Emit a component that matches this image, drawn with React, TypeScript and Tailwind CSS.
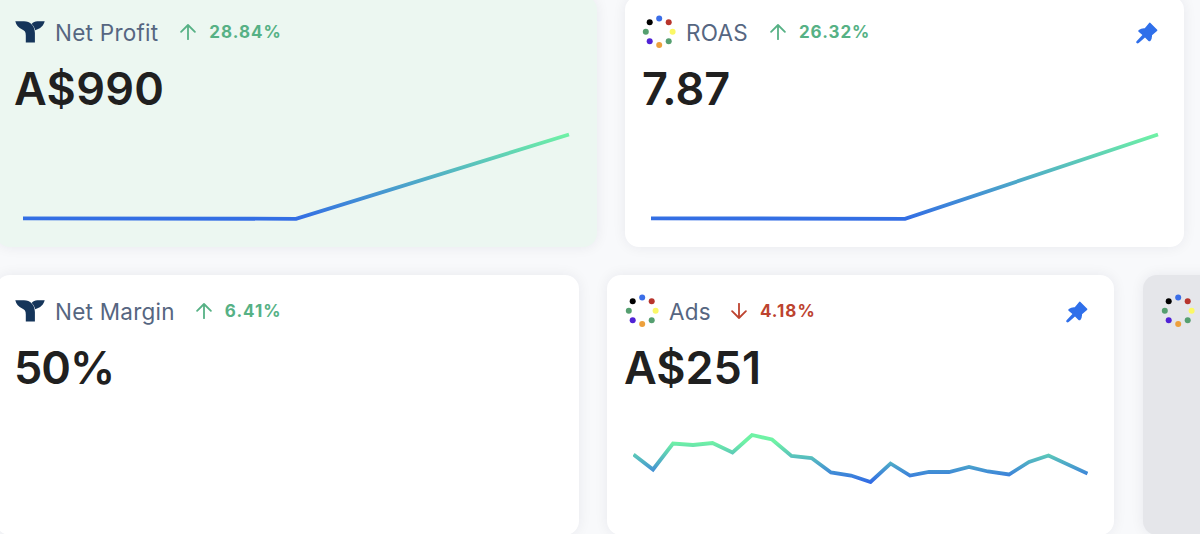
import React from "react";

const dots: [number, number, string][] = [
  [17.2, 3.4, "#3b6ee8"],
  [26.7, 7.3, "#b8342c"],
  [30.6, 16.8, "#fbf866"],
  [26.7, 26.2, "#559f70"],
  [17.2, 30.1, "#eda03c"],
  [7.7, 26.2, "#5022d6"],
  [3.8, 16.8, "#559f70"],
  [7.7, 7.3, "#000000"],
];

function DotRing() {
  return (
    <svg className="h-[34px] w-[34px] shrink-0" viewBox="0 0 34 34">
      {dots.map(([x, y, color], i) => (
        <circle key={i} cx={x} cy={y} r="3" fill={color} />
      ))}
    </svg>
  );
}

function WhaleTail() {
  return (
    <svg className="h-[22px] w-[30px] shrink-0" viewBox="0 0 30 22" fill="#15355a">
      <path d="M0.3 0.3H9C15.2 0.3 19.9 4.8 19.9 12V21.6H10.8V14.5C10.8 11 9.8 9.6 7.2 8.5C3.6 7 1.2 4.2 0.3 0.3Z" />
      <path d="M16.6 3C18.2 1.2 20 0.3 22.4 0.3H29.7C28.6 4.6 25.4 8 20.2 9.2C19.6 6.7 18.4 4.7 16.6 3Z" />
    </svg>
  );
}

function Trend({ value, down = false }: { value: string; down?: boolean }) {
  return (
    <div className={down ? "flex items-center text-[#bd432f]" : "flex items-center text-[#56b185]"}>
      <svg
        className={down ? "h-4 w-4 rotate-180" : "h-4 w-4"}
        viewBox="0 0 16 16"
        fill="none"
        stroke="currentColor"
        strokeWidth="1.8"
        strokeLinecap="round"
        strokeLinejoin="round"
      >
        <path d="M8 15.2V1M1.1 7.8 8 1l6.9 6.8" />
      </svg>
      <span className="ml-[13px] text-[17px] leading-6 font-bold tracking-[1px]">{value}</span>
    </div>
  );
}

function Pin() {
  return (
    <svg className="h-[22px] w-[22px] shrink-0" viewBox="0 0 22 22" fill="#2f6fea">
      <path d="M14.2 0.8 21.2 7.8Q21.7 8.3 21 8.9L16 13.2Q16.3 16.6 14.4 18.9Q13.4 19.8 12.5 18.9L9 15.4 2.7 20.9Q1.5 21.8 .6 21Q-.2 20.1 .8 19L6.4 12.9 2.6 9.8Q1.9 8.9 2.8 8.1Q5.4 6 8.8 6.3L13.1 1Q13.6.2 14.2.8Z" />
    </svg>
  );
}

function Sparkline({ id, points, width, height, className, top = 2 }: { id: string; points: string; width: number; height: number; className: string; top?: number }) {
  return (
    <svg className={className} viewBox={`0 0 ${width} ${height}`} fill="none">
      <defs>
        <linearGradient id={id} gradientUnits="userSpaceOnUse" x1="0" y1={top} x2="0" y2={height - 2}>
          <stop offset="0" stopColor="#6ff2a5" />
          <stop offset="1" stopColor="#326ce5" />
        </linearGradient>
      </defs>
      <polyline points={points} stroke={`url(#${id})`} strokeWidth="3.8" strokeLinejoin="miter" />
    </svg>
  );
}

const card = "shrink-0 rounded-[14px] shadow-[0_0_14px_rgba(20,30,50,0.07)]";
const title = "relative top-px text-[22.5px] leading-8 tracking-[0.25px] text-[#566681]";
const amount = "text-[45px] leading-[56px] font-semibold text-[#202020]";

export default function App() {
  return (
    <main className="h-[534px] w-[1200px] overflow-hidden bg-[#f8f9fb] font-['Inter',sans-serif]">
      <div className="-mt-1 -ml-1 flex w-[1300px] gap-7">
        <section className={`${card} h-[251px] w-[601px] bg-[#ecf7f1] pt-[19px] pl-[19px]`}>
          <div className="flex h-[34px] items-center">
            <WhaleTail />
            <h2 className={`${title} mr-[22px] ml-[10px]`}>Net Profit</h2>
            <Trend value="28.84%" />
          </div>
          <p className={`${amount} mt-[12px] -ml-px tracking-[0.3px]`}>A$990</p>
          <Sparkline id="profit" width={547} height={90} className="mt-[15px] ml-2 h-[90px] w-[547px]" points="0,86.3 273,86.8 546,2.5" />
        </section>
        <section className={`${card} h-[251px] w-[559px] bg-white pt-[19px] pl-[17px]`}>
          <div className="flex h-[34px] items-center">
            <DotRing />
            <h2 className={`${title} mr-[22px] ml-[10px]`}>ROAS</h2>
            <Trend value="26.32%" />
            <span className="mr-[26px] ml-auto pt-[2px]"><Pin /></span>
          </div>
          <p className={`${amount} mt-[12px]`}>7.87</p>
          <Sparkline id="roas" width={508} height={90} className="mt-[15px] ml-[9px] h-[90px] w-[508px]" points="0,86.3 254,86.8 507,2.5" />
        </section>
      </div>

      <div className="mt-7 -ml-1 flex w-[1400px] gap-7">
        <section className={`${card} h-[260px] w-[583px] bg-white pt-[19px] pl-[19px]`}>
          <div className="flex h-[34px] items-center">
            <WhaleTail />
            <h2 className={`${title} mr-[21px] ml-[10px]`}>Net Margin</h2>
            <Trend value="6.41%" />
          </div>
          <p className={`${amount} mt-[12px] -ml-px tracking-[-1px]`}>50%</p>
        </section>
        <section className={`${card} h-[260px] w-[507px] bg-white pt-[19px] pl-[18px]`}>
          <div className="flex h-[34px] items-center">
            <DotRing />
            <h2 className={`${title} mr-[20px] ml-[10px]`}>Ads</h2>
            <Trend value="4.18%" down />
            <span className="mr-[26px] ml-auto pt-px"><Pin /></span>
          </div>
          <p className={`${amount} mt-[12px] -ml-px`}>A$251</p>
          <Sparkline
            id="ads"
            width={455}
            height={54}
            className="mt-[34px] ml-2 h-[54px] w-[455px]"
            top={12}
            points="0.5,24.5 20,39.5 40,13.5 60,15 79.5,13 99.5,22.5 119,5 139,9.5 158.5,26 178.5,28 198,42.5 218,45.5 237.5,52 257.5,33.5 277,45.5 296,42 316,42 336,37 355,41.5 376,44.5 396,32 415.5,25.5 454.5,43.5"
          />
        </section>
        <section className={`${card} ml-px h-[260px] w-[300px] bg-[#e5e6ea] pt-[19px] pl-[18px]`}>
          <DotRing />
        </section>
      </div>
    </main>
  );
}
